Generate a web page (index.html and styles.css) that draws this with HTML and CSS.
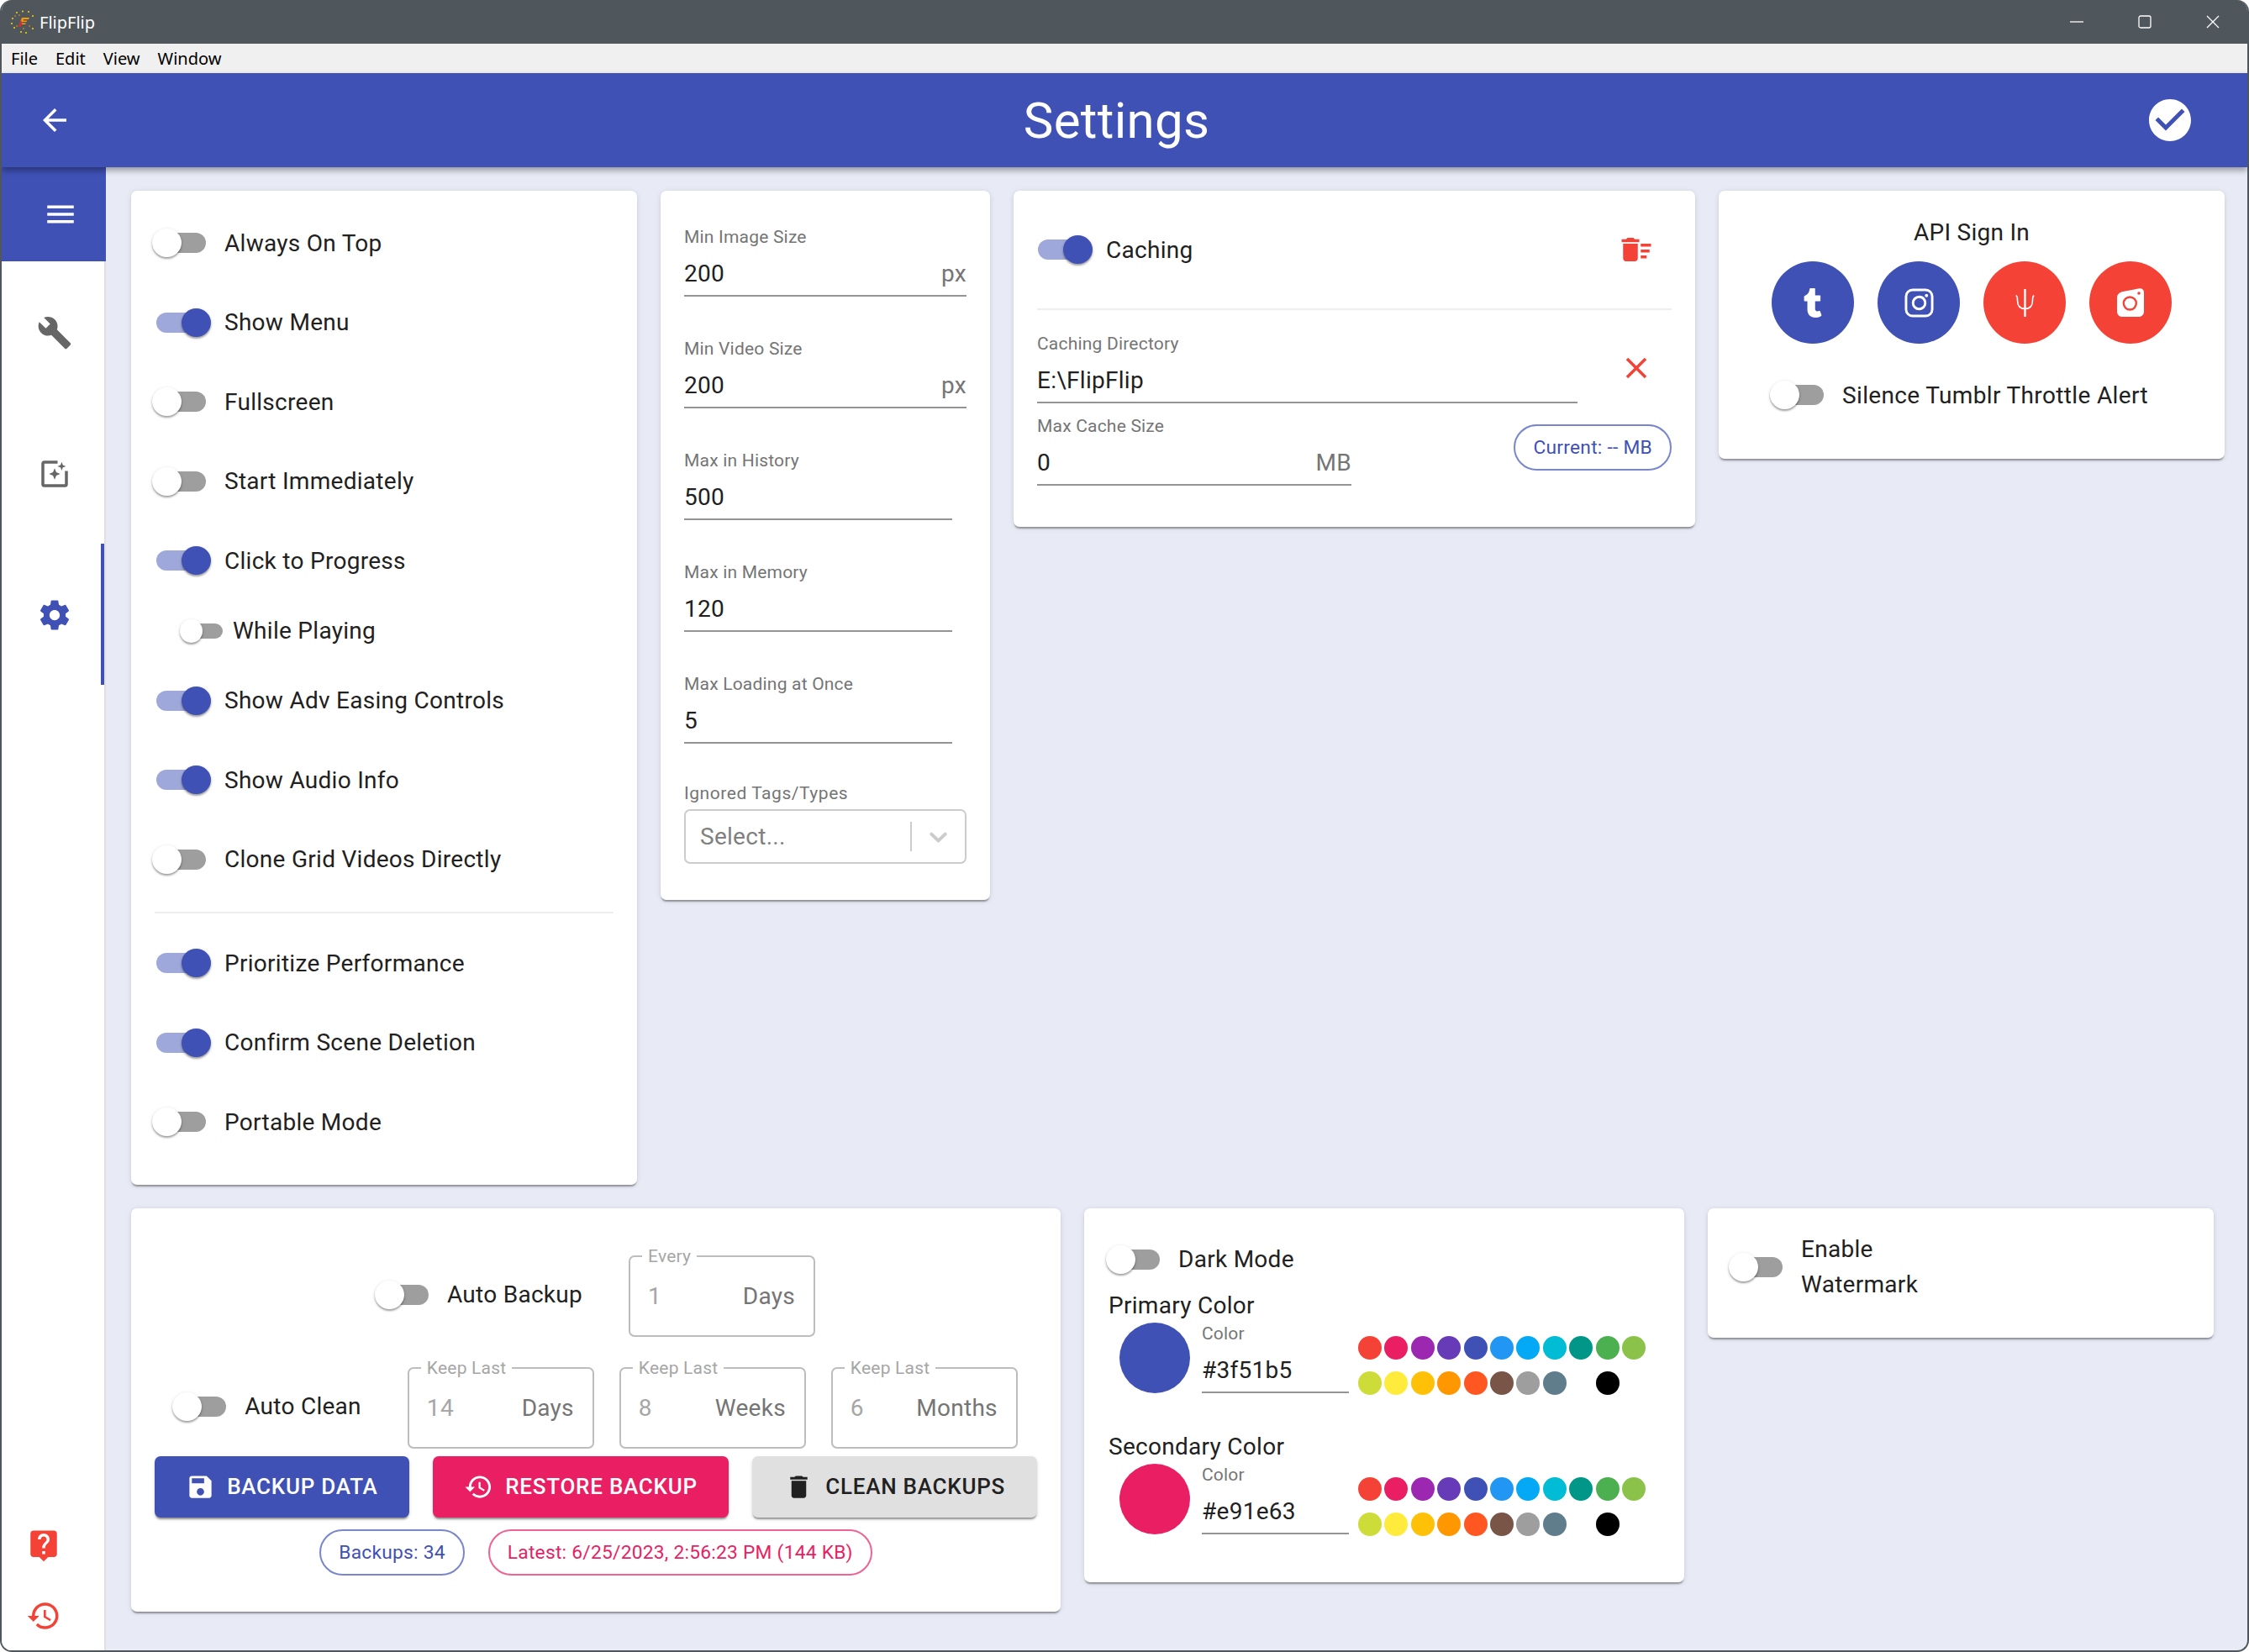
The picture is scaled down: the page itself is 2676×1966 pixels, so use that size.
FILE: index.html
```html
<!DOCTYPE html>
<html lang="en">
<head>
<meta charset="UTF-8">
<title>FlipFlip</title>
<link rel="stylesheet" href="styles.css">
</head>
<body>
<div class="window">

    <div class="titlebar">
        <svg class="app-logo" viewBox="0 0 28 28">
            <g fill="#ffd600">
                <circle cx="14" cy="1.5" r="1"/><circle cx="21" cy="2" r="1"/><circle cx="7" cy="3" r="1"/>
                <circle cx="26" cy="7" r="1"/><circle cx="2" cy="10" r="1"/><circle cx="26" cy="22" r="1"/>
                <circle cx="1" cy="16" r="1"/><circle cx="4" cy="21" r="1"/>
                <circle cx="18" cy="27" r="1"/><circle cx="12" cy="26" r="1"/>
            </g>
            <g fill="#ff9800">
                <circle cx="10" cy="6" r=".8"/><circle cx="5" cy="7" r=".8"/><circle cx="22" cy="19" r=".8"/><circle cx="7" cy="19" r=".8"/><circle cx="15" cy="22" r=".8"/>
            </g>
            <path d="M13 9h9l-1 2h-6l-.6 1.500h5l-.8 1.500h-5l-.6 1.500h5l-.8 1.500h-7z" fill="#ff9800"/>
            <path d="M12 12l-2.500 6-1 2h3l2-5z" fill="#d32f2f"/>
        </svg>
        <span class="app-name">FlipFlip</span>
        <div class="window-controls">
            <svg class="win-btn" viewBox="0 0 16 16"><path d="M0 8h16"/></svg>
            <svg class="win-btn" viewBox="0 0 16 16"><rect x="1" y="1" width="14" height="14" rx="2"/></svg>
            <svg class="win-btn" viewBox="0 0 16 16"><path d="M1 1l14 14M15 1L1 15"/></svg>
        </div>
    </div>

    <div class="menubar">
        <span>File</span>
        <span>Edit</span>
        <span>View</span>
        <span>Window</span>
    </div>

    <header class="appbar">
        <svg class="icon appbar-back" viewBox="0 0 24 24"><path d="M20 11H7.83l5.59-5.59L12 4l-8 8 8 8 1.41-1.41L7.83 13H20v-2z"/></svg>
        <h1 class="appbar-title">Settings</h1>
        <svg class="appbar-done" viewBox="0 0 24 24"><path d="M12 2C6.48 2 2 6.48 2 12s4.48 10 10 10 10-4.48 10-10S17.52 2 12 2zm-2 15l-5-5 1.41-1.41L10 14.17l7.59-7.59L19 8l-9 9z"/></svg>
    </header>

    <div class="content">
        <nav class="sidebar">
            <div class="side-menu">
                <svg class="icon" viewBox="0 0 24 24"><path d="M3 18h18v-2H3v2zm0-5h18v-2H3v2zm0-7v2h18V6H3z"/></svg>
            </div>
            <div class="side-tab">
                <svg class="icon" viewBox="0 0 24 24"><path d="M22.7 19l-9.1-9.1c.9-2.3.4-5-1.5-6.9-2-2-5-2.4-7.4-1.3L9 6 6 9 1.6 4.7C.4 7.1.9 10.1 2.9 12.1c1.9 1.9 4.6 2.4 6.9 1.5l9.1 9.1c.4.4 1 .4 1.4 0l2.3-2.3c.5-.4.5-1.1.1-1.4z"/></svg>
            </div>
            <div class="side-tab">
                <svg class="icon" viewBox="0 0 24 24"><path d="M14 3H5a2 2 0 0 0-2 2v14a2 2 0 0 0 2 2h14a2 2 0 0 0 2-2v-9h-2v9H5V5h9V3z"/><path d="M12 8.200l1.100 2.700 2.700 1.100-2.700 1.100L12 15.800l-1.100-2.700L8.200 12l2.700-1.100zM16.800 3.900l.8 2.100 2.100.8-2.100.8-.8 2.100-.8-2.100-2.100-.8 2.100-.8z"/></svg>
            </div>
            <div class="side-tab side-tab-active">
                <svg class="icon" viewBox="0 0 24 24"><path d="M19.43 12.98c.04-.32.07-.64.07-.98s-.03-.66-.07-.98l2.11-1.65c.19-.15.24-.42.12-.64l-2-3.46c-.12-.22-.39-.3-.61-.22l-2.49 1c-.52-.4-1.08-.73-1.69-.98l-.38-2.65C14.46 2.18 14.25 2 14 2h-4c-.25 0-.46.18-.49.42l-.38 2.65c-.61.25-1.17.59-1.69.98l-2.49-1c-.23-.09-.49 0-.61.22l-2 3.46c-.13.22-.07.49.12.64l2.11 1.65c-.04.32-.07.65-.07.98s.03.66.07.98l-2.11 1.65c-.19.15-.24.42-.12.64l2 3.46c.12.22.39.3.61.22l2.49-1c.52.4 1.08.73 1.69.98l.38 2.65c.03.24.24.42.49.42h4c.25 0 .46-.18.49-.42l.38-2.65c.61-.25 1.17-.59 1.69-.98l2.49 1c.23.09.49 0 .61-.22l2-3.46c.12-.22.07-.49-.12-.64l-2.11-1.65zM12 15.5c-1.93 0-3.5-1.57-3.5-3.5s1.57-3.5 3.5-3.5 3.5 1.57 3.5 3.5-1.57 3.5-3.5 3.5z"/></svg>
            </div>
            <div class="side-bottom">
                <svg class="icon" viewBox="0 0 24 24"><path d="M19 2H5c-1.11 0-2 .9-2 2v14c0 1.1.89 2 2 2h4l3 3 3-3h4c1.1 0 2-.9 2-2V4c0-1.1-.9-2-2-2zm-6 16h-2v-2h2v2zm2.07-7.75l-.9.92C13.45 11.9 13 12.5 13 14h-2v-.5c0-1.1.45-2.1 1.17-2.83l1.24-1.26c.37-.36.59-.86.59-1.41 0-1.1-.9-2-2-2s-2 .9-2 2H8c0-2.21 1.79-4 4-4s4 1.79 4 4c0 .88-.36 1.68-.93 2.25z"/></svg>
                <svg class="icon" viewBox="0 0 24 24"><path d="M13 3c-4.97 0-9 4.03-9 9H1l3.89 3.89.07.14L9 12H6c0-3.87 3.13-7 7-7s7 3.13 7 7-3.13 7-7 7c-1.93 0-3.68-.79-4.94-2.06l-1.42 1.42C8.27 19.99 10.51 21 13 21c4.97 0 9-4.03 9-9s-4.03-9-9-9zm-1 5v5l4.28 2.54.72-1.21-3.5-2.08V8H12z"/></svg>
            </div>
        </nav>

        <main class="main">
            <div class="card-row">

                <section class="card card-general">
                    <div class="setting"><span class="switch"></span>Always On Top</div>
                    <div class="setting"><span class="switch on"></span>Show Menu</div>
                    <div class="setting"><span class="switch"></span>Fullscreen</div>
                    <div class="setting"><span class="switch"></span>Start Immediately</div>
                    <div class="setting"><span class="switch on"></span>Click to Progress</div>
                    <div class="setting setting-sub"><span class="switch switch-small"></span>While Playing</div>
                    <div class="setting"><span class="switch on"></span>Show Adv Easing Controls</div>
                    <div class="setting"><span class="switch on"></span>Show Audio Info</div>
                    <div class="setting"><span class="switch"></span>Clone Grid Videos Directly</div>
                    <hr class="divider divider-general">
                    <div class="setting"><span class="switch on"></span>Prioritize Performance</div>
                    <div class="setting"><span class="switch on"></span>Confirm Scene Deletion</div>
                    <div class="setting"><span class="switch"></span>Portable Mode</div>
                </section>

                <section class="card card-limits">
                    <div class="field field-stack">
                        <label>Min Image Size</label>
                        <div class="field-input"><span>200</span><span class="unit">px</span></div>
                    </div>
                    <div class="field field-stack">
                        <label>Min Video Size</label>
                        <div class="field-input"><span>200</span><span class="unit">px</span></div>
                    </div>
                    <div class="field field-stack field-short">
                        <label>Max in History</label>
                        <div class="field-input"><span>500</span></div>
                    </div>
                    <div class="field field-stack field-short">
                        <label>Max in Memory</label>
                        <div class="field-input"><span>120</span></div>
                    </div>
                    <div class="field field-stack field-short field-last">
                        <label>Max Loading at Once</label>
                        <div class="field-input"><span>5</span></div>
                    </div>
                    <label class="select-label">Ignored Tags/Types</label>
                    <div class="select-box">
                        <span class="select-value">Select...</span>
                        <span class="select-sep"></span>
                        <svg class="select-arrow" viewBox="0 0 20 20"><path d="M4.516 7.548c0.436-0.446 1.043-0.481 1.576 0l3.908 3.747 3.908-3.747c0.533-0.481 1.141-0.446 1.574 0 0.436 0.445 0.408 1.197 0 1.615-0.406 0.418-4.695 4.502-4.695 4.502-0.217 0.223-0.502 0.335-0.787 0.335s-0.57-0.112-0.789-0.335c0 0-4.287-4.084-4.695-4.502s-0.436-1.17 0-1.615z"/></svg>
                    </div>
                </section>

                <section class="card card-caching">
                    <div class="caching-head">
                        <div class="setting-inline"><span class="switch on"></span>Caching</div>
                        <svg class="icon icon-red caching-clear" viewBox="0 0 24 24"><path d="M15 16h4v2h-4zm0-8h7v2h-7zm0 4h6v2h-6zM3 18c0 1.1.9 2 2 2h6c1.1 0 2-.9 2-2V8H3v10zM14 5h-3l-1-1H6L5 5H2v2h12z"/></svg>
                    </div>
                    <hr class="divider divider-caching">
                    <div class="caching-dir">
                        <div class="field field-dir">
                            <label>Caching Directory</label>
                            <div class="field-input"><span>E:\FlipFlip</span></div>
                        </div>
                        <svg class="icon icon-red caching-x" viewBox="0 0 24 24"><path d="M19 6.41L17.59 5 12 10.59 6.41 5 5 6.41 10.59 12 5 17.59 6.41 19 12 13.41 17.59 19 19 17.59 13.41 12z"/></svg>
                    </div>
                    <div class="caching-size">
                        <div class="field field-size">
                            <label>Max Cache Size</label>
                            <div class="field-input"><span>0</span><span class="unit">MB</span></div>
                        </div>
                        <span class="chip">Current: -- MB</span>
                    </div>
                </section>

                <section class="card card-api">
                    <div class="api-title">API Sign In</div>
                    <div class="api-buttons">
                        <span class="api-btn">
                            <svg class="api-tumblr" viewBox="0 0 320 512"><path d="M309.8 480.3c-13.6 14.5-50 31.7-97.4 31.7-120.8 0-147-88.8-147-140.6v-144H17.9c-5.5 0-10-4.5-10-10v-68c0-7.2 4.5-13.6 11.3-16 62-21.8 81.5-76 84.3-117.1.8-11 6.5-16.3 16.1-16.3h70.9c5.5 0 10 4.5 10 10v115.2h83c5.5 0 10 4.4 10 9.9v81.7c0 5.5-4.5 10-10 10h-83.4V360c0 34.2 23.7 53.6 68 35.8 4.8-1.9 9-3.2 12.7-2.2 3.5.9 5.8 3.4 7.4 7.9l22 64.3c1.8 5 3.3 10.6-.4 14.5z"/></svg>
                        </span>
                        <span class="api-btn">
                            <svg class="api-insta" viewBox="0 0 36 36"><rect x="2" y="2" width="32" height="32" rx="8"/><circle cx="18" cy="18" r="7.5"/><circle class="api-dot" cx="27" cy="9" r="2"/></svg>
                        </span>
                        <span class="api-btn api-btn-off">
                            <svg class="api-trident" viewBox="0 0 23 33"><path class="api-arms" d="M.8 7.500C2.300 8.500 2.500 10.500 2.500 13.500C2.500 20 5.500 23.500 11.500 23.500C17.500 23.500 20.500 20 20.500 13.500C20.500 10.500 20.700 8.500 22.200 7.500"/><path class="api-stem" d="M11.500 0V33"/></svg>
                        </span>
                        <span class="api-btn api-btn-off">
                            <svg class="api-twitter" viewBox="0 0 32 34"><path class="api-cam" d="M7 4L26.500.2C29.500-.2 32 1.800 32 5V28c0 3.300-2.700 6-6 6H6c-3.300 0-6-2.700-6-6V11c0-3.500 3-6.300 7-7z"/><circle class="api-lens" cx="15.300" cy="18" r="7.500"/><circle class="api-spot" cx="26" cy="6" r="1.800"/></svg>
                        </span>
                    </div>
                    <div class="setting-inline api-alert"><span class="switch"></span>Silence Tumblr Throttle Alert</div>
                </section>
            </div>

            <div class="card-row">
                <section class="card card-backup">
                    <div class="backup-row">
                        <div class="setting-inline backup-toggle"><span class="switch"></span>Auto Backup</div>
                        <fieldset class="outlined">
                            <legend>Every</legend>
                            <div class="outlined-input"><span class="outlined-value">1</span><span>Days</span></div>
                        </fieldset>
                    </div>
                    <div class="backup-row backup-row-clean">
                        <div class="setting-inline backup-toggle"><span class="switch"></span>Auto Clean</div>
                        <fieldset class="outlined">
                            <legend>Keep Last</legend>
                            <div class="outlined-input"><span class="outlined-value">14</span><span>Days</span></div>
                        </fieldset>
                        <fieldset class="outlined">
                            <legend>Keep Last</legend>
                            <div class="outlined-input"><span class="outlined-value">8</span><span>Weeks</span></div>
                        </fieldset>
                        <fieldset class="outlined">
                            <legend>Keep Last</legend>
                            <div class="outlined-input"><span class="outlined-value">6</span><span>Months</span></div>
                        </fieldset>
                    </div>
                    <div class="backup-buttons">
                        <button class="btn btn-primary">
                            <svg viewBox="0 0 24 24"><path d="M17 3H5c-1.11 0-2 .9-2 2v14c0 1.1.89 2 2 2h14c1.1 0 2-.9 2-2V7l-4-4zm-5 16c-1.66 0-3-1.34-3-3s1.34-3 3-3 3 1.34 3 3-1.34 3-3 3zm3-10H5V5h10v4z"/></svg>
                            Backup Data
                        </button>
                        <button class="btn btn-secondary">
                            <svg viewBox="0 0 24 24"><path d="M13 3c-4.97 0-9 4.03-9 9H1l3.89 3.89.07.14L9 12H6c0-3.87 3.13-7 7-7s7 3.13 7 7-3.13 7-7 7c-1.93 0-3.68-.79-4.94-2.06l-1.42 1.42C8.27 19.99 10.51 21 13 21c4.97 0 9-4.03 9-9s-4.03-9-9-9zm-1 5v5l4.28 2.54.72-1.21-3.5-2.08V8H12z"/></svg>
                            Restore Backup
                        </button>
                        <button class="btn btn-default">
                            <svg viewBox="0 0 24 24"><path d="M6 19c0 1.1.9 2 2 2h8c1.1 0 2-.9 2-2V7H6v12zM19 4h-3.5l-1-1h-5l-1 1H5v2h14V4z"/></svg>
                            Clean Backups
                        </button>
                    </div>
                    <div class="backup-chips">
                        <span class="chip">Backups: 34</span>
                        <span class="chip chip-pink">Latest: 6/25/2023, 2:56:23 PM (144 KB)</span>
                    </div>
                </section>

                <section class="card card-theme">
                    <div class="setting-inline"><span class="switch"></span>Dark Mode</div>
                    <div class="theme-title">Primary Color</div>
                    <div class="theme-row">
                        <span class="theme-current c-indigo"></span>
                        <div class="field field-color">
                            <label>Color</label>
                            <div class="field-input"><span>#3f51b5</span></div>
                        </div>
                        <div class="swatches">
                            <i class="c-red"></i><i class="c-pink"></i><i class="c-purple"></i><i class="c-deep"></i><i class="c-indigo"></i><i class="c-blue"></i><i class="c-light"></i><i class="c-cyan"></i><i class="c-teal"></i><i class="c-green"></i><i class="c-lgreen"></i>
                            <i class="c-lime"></i><i class="c-yellow"></i><i class="c-amber"></i><i class="c-orange"></i><i class="c-dorange"></i><i class="c-brown"></i><i class="c-grey"></i><i class="c-bgrey"></i><i class="c-white"></i><i class="c-black"></i>
                        </div>
                    </div>
                    <div class="theme-title theme-title-second">Secondary Color</div>
                    <div class="theme-row">
                        <span class="theme-current c-pink"></span>
                        <div class="field field-color">
                            <label>Color</label>
                            <div class="field-input"><span>#e91e63</span></div>
                        </div>
                        <div class="swatches">
                            <i class="c-red"></i><i class="c-pink"></i><i class="c-purple"></i><i class="c-deep"></i><i class="c-indigo"></i><i class="c-blue"></i><i class="c-light"></i><i class="c-cyan"></i><i class="c-teal"></i><i class="c-green"></i><i class="c-lgreen"></i>
                            <i class="c-lime"></i><i class="c-yellow"></i><i class="c-amber"></i><i class="c-orange"></i><i class="c-dorange"></i><i class="c-brown"></i><i class="c-grey"></i><i class="c-bgrey"></i><i class="c-white"></i><i class="c-black"></i>
                        </div>
                    </div>
                </section>

                <section class="card card-watermark">
                    <span class="switch"></span>
                    <div class="watermark-label">Enable<br>Watermark</div>
                </section>
            </div>
        </main>
    </div>
</div>
</body>
</html>
```

FILE: styles.css
```css
* {
    box-sizing: border-box;
}
body {
    margin: 0;
    background: #fff;
    font-family: Roboto, sans-serif;
    font-size: 28px;
    letter-spacing: .28px;
    color: #212121;
}
.window {
    display: flex;
    flex-direction: column;
    height: 100vh;
    border: 2px solid #4f565c;
    border-top: none;
    border-radius: 14px;
    overflow: hidden;
    background: #e8eaf6;
}
.icon {
    display: block;
    width: 42px;
    height: 42px;
    fill: #666;
}
.icon-red {
    fill: #f44336;
}

/* window chrome */
.titlebar {
    display: flex;
    align-items: center;
    flex: none;
    height: 52px;
    padding-left: 11px;
    background: #4f565c;
    color: #fff;
    font-family: "Noto Sans", sans-serif;
    font-size: 20px;
    letter-spacing: 0;
}
.app-logo {
    width: 28px;
    height: 28px;
    margin-right: 6px;
}
.window-controls {
    display: flex;
    gap: 65px;
    margin-left: auto;
    padding-right: 33px;
}
.win-btn {
    width: 16px;
    height: 16px;
    fill: none;
    stroke: #fff;
    stroke-width: 1.3;
}
.menubar {
    display: flex;
    align-items: center;
    gap: 21px;
    flex: none;
    height: 35px;
    padding-left: 11px;
    background: #f0f0f0;
    color: #000;
    font-family: "Noto Sans", sans-serif;
    font-size: 20px;
    letter-spacing: 0;
}
.appbar {
    position: relative;
    z-index: 2;
    display: flex;
    align-items: center;
    flex: none;
    height: 112px;
    padding-left: 42px;
    padding-right: 62px;
    background: #3f51b5;
    box-shadow: 0 4px 7px rgba(0, 0, 0, .35);
}
.appbar-back {
    fill: #fff;
}
.appbar-title {
    flex: 1;
    margin: 0;
    padding-left: 19px;
    color: #fff;
    font-size: 60px;
    font-weight: 400;
    text-align: center;
}
.appbar-done {
    width: 60px;
    height: 60px;
    fill: #fff;
}

/* sidebar */
.content {
    display: flex;
    flex: 1;
    min-height: 0;
}
.sidebar {
    display: flex;
    flex-direction: column;
    flex: none;
    width: 122px;
    margin-right: 2px;
    background: #fff;
    box-shadow: 2px 0 0 #e0e0e0;
}
.side-menu {
    display: flex;
    align-items: center;
    height: 112px;
    padding-left: 49px;
    background: #3f51b5;
    box-shadow: 2px 0 0 #3f51b5;
}
.side-menu .icon {
    fill: #fff;
}
.side-tab {
    display: flex;
    align-items: center;
    height: 168px;
    padding: 2px 0 0 42px;
}
.side-tab-active {
    border-right: 4px solid #3f51b5;
}
.side-tab-active .icon {
    fill: #3f51b5;
}
.side-bottom {
    display: flex;
    flex-direction: column;
    gap: 42px;
    margin-top: auto;
    padding: 0 0 20px 29px;
}
.side-bottom .icon {
    fill: #f44336;
}

/* page */
.main {
    flex: 1;
    min-width: 0;
    padding: 28px 0 0 30px;
}
.card-row {
    display: flex;
    align-items: flex-start;
    gap: 28px;
    margin-bottom: 28px;
}
.card {
    flex: none;
    background: #fff;
    border-radius: 7px;
    box-shadow: 0 3px 2px -1px rgba(0, 0, 0, .35), 0 1px 6px rgba(0, 0, 0, .12);
}

/* switches */
.switch {
    position: relative;
    display: block;
    flex: none;
    width: 70px;
    height: 34px;
    margin-right: 16px;
}
.switch::before {
    content: "";
    position: absolute;
    left: 5px;
    top: 5px;
    width: 59px;
    height: 24px;
    border-radius: 12px;
    background: #9e9e9e;
}
.switch::after {
    content: "";
    position: absolute;
    left: 0;
    top: 0;
    width: 35px;
    height: 34px;
    border-radius: 50%;
    background: #fff;
    box-shadow: 0 2px 2px rgba(0, 0, 0, .3), 0 1px 4px rgba(0, 0, 0, .14);
}
.switch.on::before {
    background: #9fa8da;
}
.switch.on::after {
    left: 35px;
    background: #3f51b5;
}
.switch-small {
    width: 51px;
    height: 28px;
    margin-right: 12px;
}
.switch-small::before {
    left: 6px;
    width: 45px;
    height: 18px;
}
.switch-small::after {
    width: 27px;
    height: 28px;
}

/* general card */
.card-general {
    width: 602px;
    padding: 15px 25px 27px;
}
.setting {
    display: flex;
    align-items: center;
    height: 94.5px;
}
.setting-sub {
    height: 72px;
    padding-left: 33px;
}
.setting-inline {
    display: flex;
    align-items: center;
}
.divider {
    height: 2px;
    border: none;
    background: #eeeeee;
}
.divider-general {
    margin: 15px 3px 12px;
}

/* text fields */
.field label,
.select-label {
    display: block;
    height: 28px;
    font-size: 21px;
    line-height: 28px;
    letter-spacing: .2px;
    color: #757575;
}
.select-label {
    letter-spacing: .55px;
}
.field-input {
    display: flex;
    justify-content: space-between;
    height: 50px;
    margin-top: 7px;
    border-bottom: 2px solid #949494;
    line-height: 45px;
}
.unit {
    color: #757575;
}
.card-limits {
    width: 392px;
    padding: 41px 28px 43px;
}
.field-stack {
    margin-bottom: 48px;
}
.field-short {
    width: 319px;
}
.field-last {
    margin-bottom: 45px;
}
.select-box {
    display: flex;
    align-items: center;
    height: 65px;
    margin-top: 5px;
    padding: 0 14px 0 17px;
    border: 2px solid #cccccc;
    border-radius: 7px;
}
.select-value {
    flex: 1;
    color: #808080;
}
.select-sep {
    width: 2px;
    height: 35px;
    margin-right: 14px;
    background: #cccccc;
}
.select-arrow {
    width: 35px;
    height: 35px;
    fill: #cccccc;
}

/* caching card */
.card-caching {
    width: 811px;
    padding: 49px 28px 49px;
}
.caching-head {
    display: flex;
    align-items: center;
    justify-content: space-between;
    margin-left: -4px;
}
.caching-clear {
    margin-right: 21px;
}
.divider-caching {
    margin: 49px 0 26px;
}
.caching-dir {
    display: flex;
    align-items: center;
}
.field-dir {
    width: 643px;
}
.caching-x {
    margin-left: 49px;
}
.caching-size {
    display: flex;
    align-items: flex-start;
    justify-content: space-between;
    margin-top: 13px;
}
.field-size {
    width: 374px;
}
.caching-size .chip {
    margin-top: 12px;
}
.chip {
    display: inline-flex;
    align-items: center;
    height: 55px;
    padding: 0 21px;
    border: 2px solid #7986cb;
    border-radius: 28px;
    color: #3f51b5;
    font-size: 22.75px;
    letter-spacing: .25px;
}
.chip-pink {
    border-color: #f06292;
    color: #e91e63;
}

/* api card */
.card-api {
    width: 602px;
    padding: 29px 0 59px;
}
.api-title {
    margin-bottom: 13px;
    line-height: 42px;
    text-align: center;
}
.api-buttons {
    display: flex;
    justify-content: center;
    gap: 28px;
}
.api-btn {
    display: flex;
    align-items: center;
    justify-content: center;
    width: 98px;
    height: 98px;
    border-radius: 50%;
    background: #3f51b5;
}
.api-btn-off {
    background: #f44336;
}
.api-tumblr {
    width: 22px;
    height: 35px;
    fill: #fff;
}
.api-insta {
    width: 35px;
    height: 35px;
    fill: none;
    stroke: #fff;
    stroke-width: 3;
}
.api-dot {
    fill: #fff;
    stroke: none;
}
.api-trident {
    width: 23px;
    height: 33px;
    fill: none;
    stroke: #fff;
}
.api-arms {
    stroke-width: 1.6;
}
.api-stem {
    stroke-width: 2.4;
}
.api-twitter {
    width: 32px;
    height: 34px;
}
.api-cam {
    fill: #fff;
}
.api-lens {
    fill: #fff;
    stroke: #f44336;
    stroke-width: 2.4;
}
.api-spot {
    fill: #f44336;
}
.api-alert {
    margin: 44px 0 0 61px;
    letter-spacing: .35px;
}

/* backup card */
.card-backup {
    width: 1106px;
    padding: 43px 28px 43px;
}
.backup-row {
    display: flex;
    align-items: center;
    justify-content: center;
    gap: 30px;
    padding-right: 2px;
}
.backup-row-clean {
    margin-top: 23px;
}
.backup-toggle {
    margin: 10px 25px 0 0;
}
.outlined {
    flex: none;
    width: 222px;
    height: 110px;
    min-width: 0;
    margin: 0;
    padding: 0;
    border: 2px solid #bdbdbd;
    border-radius: 7px;
}
.outlined legend {
    margin-left: 14px;
    padding: 0 7px;
    color: #a6a6a6;
    font-size: 21px;
    line-height: 28px;
    letter-spacing: .2px;
}
.outlined-input {
    display: flex;
    justify-content: space-between;
    padding: 13px 22px 0 21px;
    color: #757575;
    line-height: 42px;
}
.outlined-value {
    color: #a6a6a6;
}
.backup-buttons {
    display: flex;
    justify-content: center;
    gap: 28px;
    margin-top: 9px;
}
.btn {
    display: flex;
    align-items: center;
    justify-content: center;
    gap: 14px;
    height: 73px;
    border: none;
    border-radius: 7px;
    font-family: Roboto, sans-serif;
    font-size: 26px;
    font-weight: 500;
    letter-spacing: .75px;
    text-transform: uppercase;
    box-shadow: 0 3px 2px -1px rgba(0, 0, 0, .35), 0 2px 4px rgba(0, 0, 0, .14);
}
.btn svg {
    width: 35px;
    height: 35px;
    fill: currentColor;
}
.btn-primary {
    width: 303px;
    background: #3f51b5;
    color: #fff;
}
.btn-secondary {
    width: 353px;
    background: #e91e63;
    color: #fff;
}
.btn-default {
    width: 339px;
    background: #e0e0e0;
    color: #212121;
}
.backup-chips {
    display: flex;
    justify-content: center;
    gap: 28px;
    margin-top: 14px;
}

/* theme card */
.card-theme {
    width: 714px;
    padding: 44px 26px 55px;
}
.theme-title {
    margin: 17px 0 -2px 3px;
    line-height: 42px;
}
.theme-title-second {
    margin-top: 41px;
}
.theme-row {
    display: flex;
    align-items: flex-start;
    margin-left: 16px;
}
.theme-current {
    flex: none;
    width: 84px;
    height: 84px;
    margin: 1px 14px 0 0;
    border-radius: 50%;
}
.field-color {
    flex: none;
    width: 175px;
}
.swatches {
    display: grid;
    grid-template-columns: repeat(11, 28px);
    column-gap: 3.4px;
    row-gap: 14px;
    margin: 17px 0 0 11px;
}
.swatches i {
    display: block;
    height: 28px;
    border-radius: 50%;
}
.c-red { background: #f44336; }
.c-pink { background: #e91e63; }
.c-purple { background: #9c27b0; }
.c-deep { background: #673ab7; }
.c-indigo { background: #3f51b5; }
.c-blue { background: #2196f3; }
.c-light { background: #03a9f4; }
.c-cyan { background: #00bcd4; }
.c-teal { background: #009688; }
.c-green { background: #4caf50; }
.c-lgreen { background: #8bc34a; }
.c-lime { background: #cddc39; }
.c-yellow { background: #ffeb3b; }
.c-amber { background: #ffc107; }
.c-orange { background: #ff9800; }
.c-dorange { background: #ff5722; }
.c-brown { background: #795548; }
.c-grey { background: #9e9e9e; }
.c-bgrey { background: #607d8b; }
.c-white { background: #fff; }
.c-black { background: #000; }

/* watermark card */
.card-watermark {
    display: flex;
    align-items: center;
    width: 602px;
    padding: 28px 25px 42px;
}
.watermark-label {
    line-height: 42px;
}
```
